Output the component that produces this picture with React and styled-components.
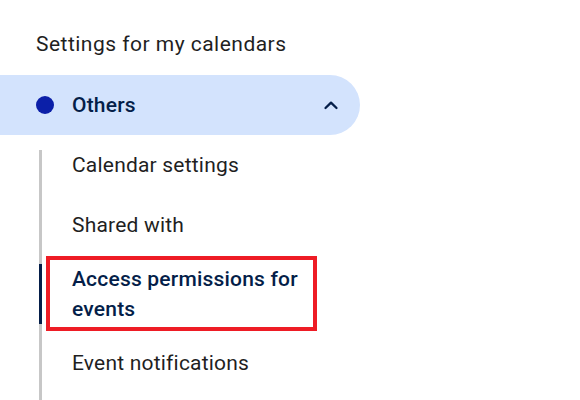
import React from "react";
import styled, { createGlobalStyle } from "styled-components";

const GlobalStyle = createGlobalStyle`
  html, body {
    margin: 0;
    padding: 0;
    background: #fff;
    font-family: Roboto, "Noto Sans", Arial, sans-serif;
  }
`;

const Page = styled.div`
  width: 580px;
  height: 400px;
  overflow: hidden;
  padding-top: 29px;
  box-sizing: border-box;
`;

const Heading = styled.h2`
  margin: 0 0 16px 36px;
  font-size: 21px;
  font-weight: 400;
  line-height: 30px;
  letter-spacing: 0.48px;
  color: #1f1f1f;
`;

const CalendarRow = styled.div`
  width: 360px;
  height: 60px;
  box-sizing: border-box;
  display: flex;
  align-items: center;
  padding: 0 17px 0 36px;
  background: #d3e3fd;
  border-radius: 0 30px 30px 0;
`;

const Dot = styled.span`
  width: 18px;
  height: 18px;
  border-radius: 50%;
  background: ${(p) => p.color};
  flex: none;
`;

const CalendarName = styled.span`
  margin-left: 18px;
  flex: 1;
  font-size: 21px;
  font-weight: 500;
  letter-spacing: 0.2px;
  color: #041e49;
`;

const Chevron = styled.svg`
  width: 24px;
  height: 24px;
  flex: none;
`;

const SubList = styled.ul`
  position: relative;
  list-style: none;
  margin: 0 0 0 39px;
  padding: 0 0 20px 3px;

  &::before {
    content: "";
    position: absolute;
    left: 0;
    top: 15px;
    bottom: 0;
    width: 3px;
    background: #c7c7c7;
  }
`;

const SubItem = styled.li`
  position: relative;
  min-height: 60px;
  box-sizing: border-box;
  padding: ${(p) => (p.$multi ? "1px 0 2px" : "0")};
  display: flex;
  align-items: center;

  ${(p) =>
    p.$active &&
    `
    &::before {
      content: "";
      position: absolute;
      left: -3px;
      top: 9px;
      bottom: 9px;
      width: 3px;
      background: #041e49;
      z-index: 1;
    }
  `}
`;

const Label = styled.span`
  display: block;
  box-sizing: border-box;
  width: ${(p) => (p.$marked ? "271px" : "auto")};
  margin-left: ${(p) => (p.$marked ? "4px" : "30px")};
  padding: ${(p) => (p.$marked ? "4px 6px 3px 22px" : "0")};
  border: ${(p) => (p.$marked ? "4px solid #ee1c25" : "none")};
  font-size: 21px;
  line-height: 30px;
  letter-spacing: 0.2px;
  font-weight: ${(p) => (p.$active ? 500 : 400)};
  color: ${(p) => (p.$active ? "#041e49" : "#1f1f1f")};
`;

const items = [
  { label: "Calendar settings" },
  { label: "Shared with" },
  { label: "Access permissions for events", active: true, marked: true },
  { label: "Event notifications" },
];

export default function App() {
  return (
    <Page>
      <GlobalStyle />
      <Heading>Settings for my calendars</Heading>
      <CalendarRow>
        <Dot color="#0b1fa8" />
        <CalendarName>Others</CalendarName>
        <Chevron viewBox="0 0 24 24">
          <path
            d="M6.5 15 12 9.7l5.5 5.3"
            fill="none"
            stroke="#041e49"
            strokeWidth="2.3"
            strokeLinecap="round"
            strokeLinejoin="round"
          />
        </Chevron>
      </CalendarRow>
      <SubList>
        {items.map((it) => (
          <SubItem key={it.label} $active={it.active} $multi={it.marked}>
            <Label $active={it.active} $marked={it.marked}>
              {it.label}
            </Label>
          </SubItem>
        ))}
      </SubList>
    </Page>
  );
}
